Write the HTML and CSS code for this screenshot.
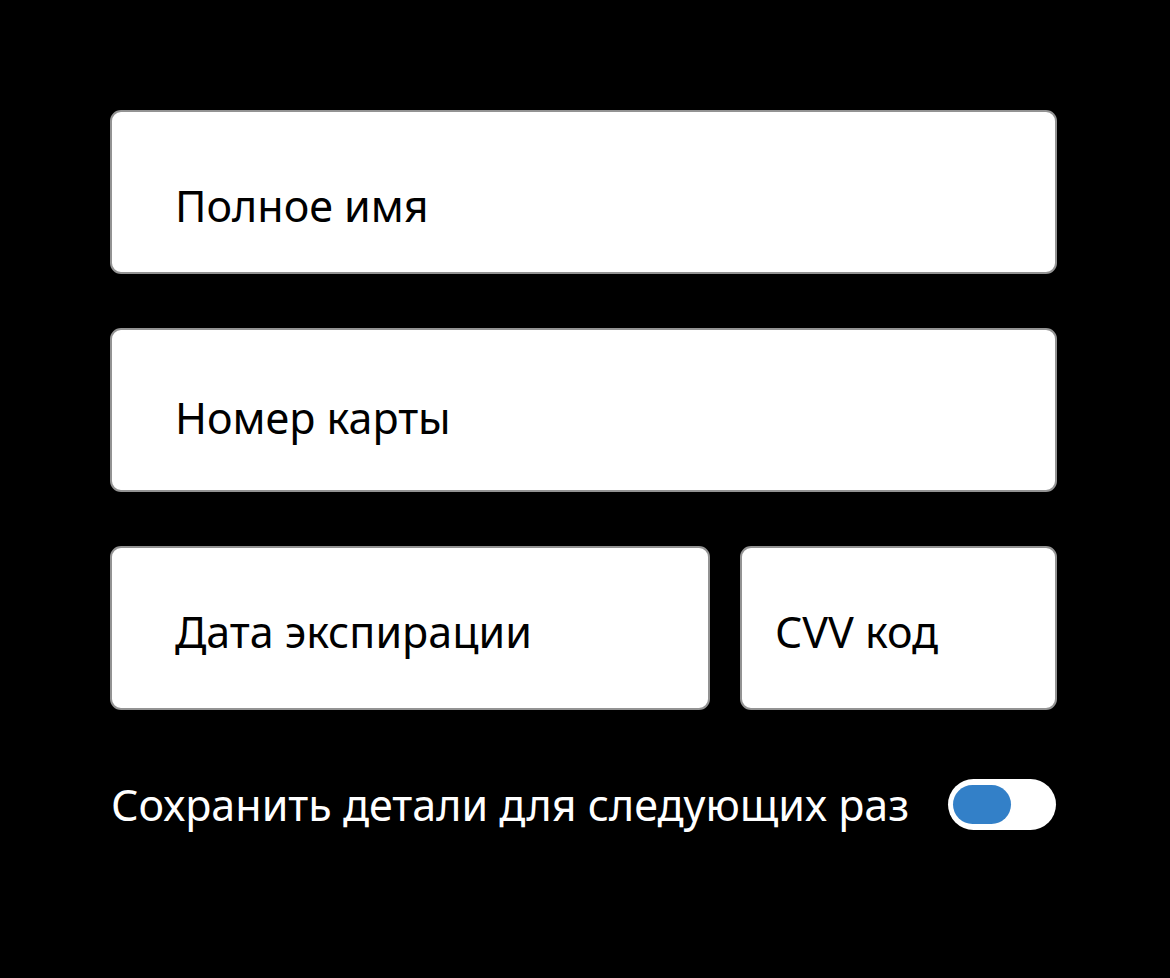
FILE: index.html
```html
<!DOCTYPE html>
<html lang="ru">
<head>
<meta charset="utf-8">
<link rel="stylesheet" href="styles.css">
</head>
<body>
<div class="form">
  <div class="field f1"><span class="label">Полное имя</span></div>
  <div class="field f2"><span class="label">Номер карты</span></div>
  <div class="row">
    <div class="field f3 wide"><span class="label">Дата экспирации</span></div>
    <div class="field f3 narrow"><span class="label">CVV код</span></div>
  </div>
  <div class="save">
    <span class="save-text">Сохранить детали для следующих раз</span>
    <span class="toggle"><span class="knob"></span></span>
  </div>
</div>
</body>
</html>
```
FILE: styles.css
```css
html, body {
  margin: 0;
  padding: 0;
  background: #000;
}
body {
  width: 1170px;
  height: 978px;
  font-family: "Noto Sans", "Open Sans", sans-serif;
}
.form {
  padding: 110px 0 0 110px;
  width: 947px;
  display: flex;
  flex-direction: column;
  gap: 54px;
}
.field {
  box-sizing: border-box;
  height: 164px;
  background: #fff;
  border: 2px solid #939393;
  border-radius: 11px;
  display: flex;
  align-items: center;
  padding-left: 63px;
}
.label {
  font-size: 43px;
  color: #000;
  line-height: 1;
}
.f1 { padding-top: 26px; }
.f2 { padding-top: 15px; }
.f3 { padding-top: 6px; }
.row {
  display: flex;
  gap: 30px;
}
.wide { flex: 0 0 600px; }
.narrow { flex: 1; padding-left: 33px; }
.save {
  display: flex;
  align-items: center;
  justify-content: space-between;
  height: 52px;
  margin-top: 14px;
  padding-right: 1px;
}
.save-text {
  color: #fff;
  font-size: 43px;
  line-height: 1;
  padding-left: 1px;
}
.toggle {
  width: 108px;
  height: 51px;
  background: #fff;
  border-radius: 26px;
  display: flex;
  align-items: center;
  padding-left: 5px;
  box-sizing: border-box;
}
.knob {
  width: 58px;
  height: 39px;
  background: #3380c8;
  border-radius: 20px;
}
```
